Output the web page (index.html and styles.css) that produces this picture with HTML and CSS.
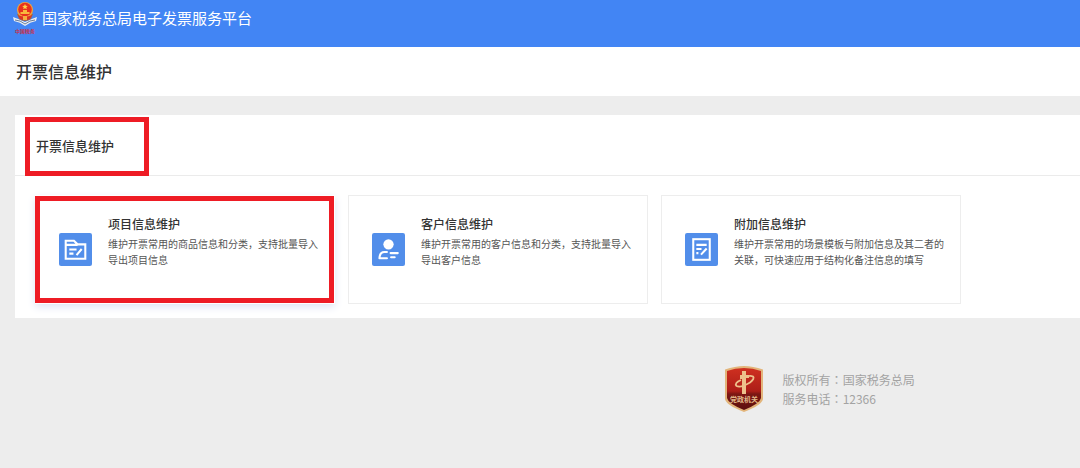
FILE: index.html
```html
<!DOCTYPE html>
<html lang="zh-CN">
<head>
<meta charset="utf-8">
<title>开票信息维护</title>
<link rel="stylesheet" href="styles.css">
</head>
<body>
<header class="topbar">
  <svg class="emblem" viewBox="0 0 26 36" aria-hidden="true">
    <path d="M1 17 Q7 19 13 22 Q19 19 25 17 L24 21 Q18 22 13 26 Q8 22 2 21Z" fill="#e9edf2"/>
    <path d="M3 20 Q8 20 13 24 Q18 20 23 20" fill="none" stroke="#6b7f9d" stroke-width="1"/>
    <path d="M5 14 H21 L19 19 Q13 23 7 19Z" fill="#a5683f"/>
    <circle cx="13" cy="10" r="8" fill="#f2a53a"/>
    <circle cx="13" cy="9.500" r="6.800" fill="#e8311f"/>
    <path d="M13 4 l.8 1.800 2 .2-1.500 1.300.5 1.900-1.800-1-1.800 1 .5-1.900L10.200 6l2-.2z" fill="#ffd34d"/>
    <path d="M8.500 12 H17.500 V14 H8.500Z M11 10 H15 V12 H11Z" fill="#f8b93c"/>
    <path d="M6 15 Q13 18 20 15 L18 19 Q13 21 8 19Z" fill="#dd3524"/>
    <path d="M11 16 H15 V20 H11Z" fill="#f5b040"/>
    <text class="emblem-name" x="13" y="33" text-anchor="middle">中国税务</text>
  </svg>
  <span class="platform">国家税务总局电子发票服务平台</span>
</header>
<div class="titlebar"><h1 class="page-title">开票信息维护</h1></div>
<main class="content">
  <section class="panel">
    <div class="panel-head"><h2 class="panel-title marked">开票信息维护</h2></div>
    <div class="cards">
      <a class="card card-active marked" href="#items">
        <svg class="card-icon" viewBox="0 0 32 32" aria-hidden="true">
          <rect width="32" height="32" rx="2" fill="#528eea"/>
          <path d="M6.500 25 V7.500 H14.500 L18 11 H25.500 V25Z M6.500 11.500 H18" fill="none" stroke="#fff" stroke-width="2"/>
          <path d="M10 16 H17 M10 20 H14 M17 21.500 L22 15.500" fill="none" stroke="#fff" stroke-width="2"/>
        </svg>
        <span class="card-text"><strong class="card-title">项目信息维护</strong><span class="card-desc">维护开票常用的商品信息和分类，支持批量导入导出项目信息</span></span>
      </a>
      <a class="card" href="#customers">
        <svg class="card-icon" viewBox="0 0 32 32" aria-hidden="true">
          <rect width="32" height="32" rx="2" fill="#528eea"/>
          <circle cx="16" cy="11" r="5" fill="#fff"/>
          <path d="M14.500 18.500 H12 Q7.500 18.500 7.200 24.500 H14.500 M18 19.500 H25 M18.500 23.500 H22" fill="none" stroke="#fff" stroke-width="2" stroke-linejoin="round" stroke-linecap="round"/>
        </svg>
        <span class="card-text"><strong class="card-title">客户信息维护</strong><span class="card-desc">维护开票常用的客户信息和分类，支持批量导入导出客户信息</span></span>
      </a>
      <a class="card" href="#extra">
        <svg class="card-icon" viewBox="0 0 32 32" aria-hidden="true">
          <rect width="32" height="32" rx="2" fill="#528eea"/>
          <rect x="8" y="6" width="16" height="20" fill="none" stroke="#fff" stroke-width="2"/>
          <path d="M11 11.500 H21 M11 15.500 H16 M11 19.500 H13 M15.500 21 L21 15" fill="none" stroke="#fff" stroke-width="2"/>
        </svg>
        <span class="card-text"><strong class="card-title">附加信息维护</strong><span class="card-desc">维护开票常用的场景模板与附加信息及其二者的关联，可快速应用于结构化备注信息的填写</span></span>
      </a>
    </div>
  </section>
</main>
<footer class="footer">
  <svg class="shield" viewBox="0 0 40 48" aria-hidden="true">
    <defs>
      <linearGradient id="red" x1="0" y1="0" x2="0" y2="1">
        <stop offset="0" stop-color="#cf3020"/><stop offset=".55" stop-color="#ad1e18"/><stop offset=".62" stop-color="#7c1713"/><stop offset="1" stop-color="#5c100e"/>
      </linearGradient>
    </defs>
    <path d="M20 1 Q29 1 39 4.500 V34 Q38 40 20 47 Q2 40 1 34 V4.500 Q11 1 20 1Z" fill="#e3b57b"/>
    <path d="M20 3 Q29 3 37 6 V33 Q36 38.500 20 45 Q4 38.500 3 33 V6 Q11 3 20 3Z" fill="url(#red)"/>
    <path d="M18 6 H22 V10 H25 V13 H22 V29 H18 V14 H16 V10 H18Z" fill="#edc28c"/>
    <path d="M17 15 Q10 18 12.500 21 Q17 23 26 17.500 Q31 13.500 29 11.500 Q26 10 22 12" fill="none" stroke="#edc28c" stroke-width="1.800"/>
    <text class="shield-name" x="20" y="37" text-anchor="middle">党政机关</text>
  </svg>
  <div class="footer-text">
    <div>版权所有<span class="colon" lang="zh-TW">：</span>国家税务总局</div>
    <div>服务电话<span class="colon" lang="zh-TW">：</span>12366</div>
  </div>
</footer>
</body>
</html>
```

FILE: styles.css
```css
* { box-sizing: border-box; }

body {
  margin: 0;
  min-height: 100vh;
  background: #ededed;
  color: #333;
  font-family: "Noto Sans CJK SC", sans-serif;
}

h1, h2 { margin: 0; }

.topbar {
  display: flex;
  align-items: flex-start;
  gap: 4px;
  height: 47px;
  padding-left: 12px;
  background: #4285f4;
  color: #fff;
}

.emblem { width: 26px; height: 36px; flex: none; }
.emblem-name { font-size: 5px; font-weight: 700; fill: #c9304a; }

.platform { font-size: 15px; line-height: 36px; }

.titlebar {
  display: flex;
  align-items: center;
  height: 49px;
  padding: 0 16px 2px;
  background: #fff;
}

.page-title { font-size: 16px; font-weight: 500; line-height: 24px; }

.content { padding: 19px 0 0 15px; }

.panel { background: #fff; }

.panel-head {
  padding: 2px 10px 0;
  height: 61px;
  border-bottom: 1px solid #ebebeb;
}

.marked { position: relative; }
.marked::after {
  content: "";
  position: absolute;
  inset: 0;
  border: 5px solid #ee1c25;
  pointer-events: none;
}

.panel-title {
  width: max-content;
  padding: 0 35px 2px 11px;
  font-size: 13px;
  font-weight: 500;
  line-height: 57px;
}

.cards {
  display: grid;
  grid-template-columns: repeat(auto-fill, 300px);
  gap: 13px;
  padding: 19px 20px 14px;
}

.card {
  display: flex;
  align-items: center;
  gap: 16px;
  min-height: 109px;
  padding: 19px 10px 19px 23px;
  border: 1px solid #ededed;
  color: inherit;
  text-decoration: none;
}

.card-active { border-color: transparent; box-shadow: 0 3px 8px #dfe4f3; }
.card-active::after { inset: 0 0 0 -1px; }

.card-icon { width: 33px; height: 33px; flex: none; }

.card-text { align-self: flex-start; flex: 1; }

.card-title {
  display: block;
  margin-bottom: 3px;
  font-size: 12px;
  font-weight: 500;
  line-height: 18px;
}

.card-desc {
  display: block;
  color: #555;
  font-size: 10px;
  line-height: 16px;
}

.footer {
  display: flex;
  align-items: center;
  gap: 19px;
  padding: 47px 0 16px 67%;
  color: #a3a3a3;
  font-size: 12px;
  line-height: 19px;
}

.shield { width: 40px; height: 48px; flex: none; }
.shield-name { font-size: 7px; font-weight: 700; fill: #e3b98a; }
.colon { font-family: "Noto Sans CJK TC", sans-serif; }
```
